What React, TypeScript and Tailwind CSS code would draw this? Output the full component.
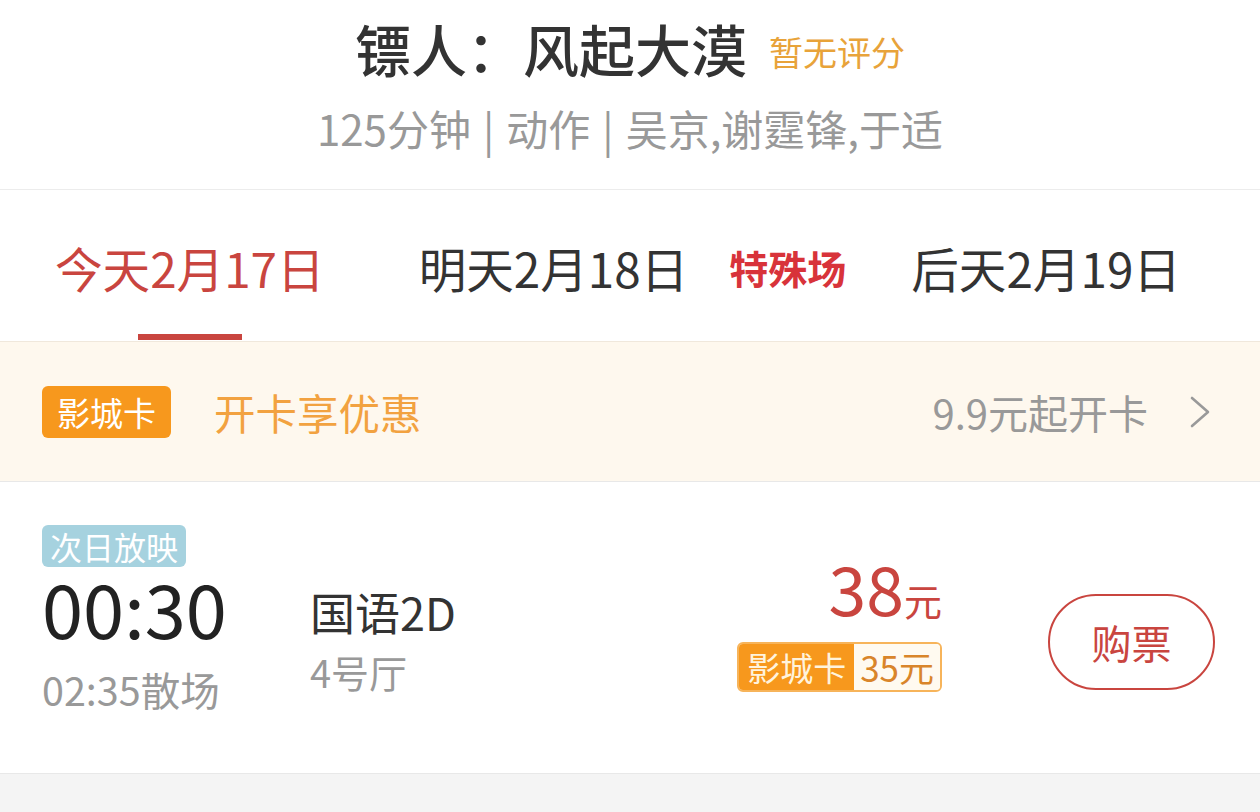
const font = { fontFamily: '"Noto Sans CJK SC", "Noto Sans", sans-serif' };

function Chevron() {
  return (
    <svg width="24" height="32" viewBox="0 0 24 32" className="ml-[40px] mr-[48px]">
      <polyline points="4,2 20,16 4,30" fill="none" stroke="#999" strokeWidth="2.6" strokeLinecap="round" strokeLinejoin="round" />
    </svg>
  );
}

function Header() {
  return (
    <div className="flex flex-col items-center h-[190px] border-b border-[#ececec] bg-white">
      <div className="flex items-end mt-[16px] h-[64px]">
        <span className="text-[56px] leading-[64px] font-medium text-[#333]">镖人：风起大漠</span>
        <span className="ml-[22px] mb-[6px] text-[34px] leading-[44px] text-[#e8a33a]">暂无评分</span>
      </div>
      <div className="mt-[24px] flex items-center text-[42px] leading-[48px] text-[#999]">
        <span>125分钟</span>
        <span className="mx-[12px]">|</span>
        <span>动作</span>
        <span className="mx-[12px]">|</span>
        <span>吴京,谢霆锋,于适</span>
      </div>
    </div>
  );
}

function Tabs() {
  return (
    <div className="flex items-start h-[151px] bg-white pt-[40px]">
      <div className="flex flex-col items-center ml-[55px]">
        <span className="text-[47.6px] leading-[76px] text-[#c9453f]">今天2月17日</span>
        <span className="mt-[28px] w-[104px] h-[6px] bg-[#c9453f]" />
      </div>
      <span className="ml-[94px] text-[47.6px] leading-[76px] text-[#333]">明天2月18日</span>
      <span className="ml-[41px] mt-[2px] text-[39px] leading-[70px] font-bold text-[#d8333a]">特殊场</span>
      <span className="ml-[65px] text-[47.6px] leading-[76px] text-[#333]">后天2月19日</span>
    </div>
  );
}

function CardBanner() {
  return (
    <div className="flex items-center h-[141px] bg-[#fef8ee] border-t border-[#f0e8dc] border-b border-b-[#e8e8e8]">
      <span className="ml-[42px] h-[52px] px-[15px] rounded-[6px] bg-[#f7981d] text-white text-[33px] leading-[52px]">影城卡</span>
      <span className="ml-[43px] text-[41.5px] leading-[52px] text-[#f2a240]">开卡享优惠</span>
      <span className="ml-auto text-[40px] leading-[52px] text-[#999]">9.9元起开卡</span>
      <Chevron />
    </div>
  );
}

function Showtime() {
  return (
    <div className="flex items-start h-[292px] bg-white border-b border-[#e8e8e8]">
      <div className="flex flex-col items-start pl-[42px] pt-[43px] w-[310px]">
        <span className="h-[42px] px-[8px] rounded-[6px] bg-[#a6d2df] text-white text-[32px] leading-[42px]">次日放映</span>
        <span className="mt-[6px] text-[74px] leading-[68px] text-[#222]">00:30</span>
        <span className="mt-[24px] text-[39.5px] leading-[48px] text-[#999]">02:35散场</span>
      </div>
      <div className="flex flex-col pt-[102px] flex-1">
        <span className="text-[45px] leading-[56px] text-[#333]">国语2D</span>
        <span className="mt-[8px] text-[38px] leading-[48px] text-[#999]">4号厅</span>
      </div>
      <div className="flex flex-col items-end pt-[69px]">
        <div className="flex items-baseline h-[72px]">
          <span className="text-[68px] leading-[72px] text-[#c9453f]">38</span>
          <span className="text-[38px] leading-[72px] text-[#c9453f]">元</span>
        </div>
        <div className="mt-[19px] flex h-[50px] rounded-[6px] border-2 border-[#f7b45a] overflow-hidden">
          <span className="px-[8px] bg-[#f7981d] text-[#fff3dc] text-[33px] leading-[46px]">影城卡</span>
          <span className="px-[6px] bg-[#fffaf0] text-[#d9852a] text-[35px] leading-[46px]">35元</span>
        </div>
      </div>
      <div className="mt-[112px] ml-[106px] mr-[45px] flex items-center justify-center w-[167px] h-[96px] rounded-full border-2 border-[#c9453f] text-[40px] text-[#c9453f]">
        购票
      </div>
    </div>
  );
}

export default function App() {
  return (
    <div className="w-[1260px] h-[812px] bg-[#f4f4f4] overflow-hidden" style={font}>
      <Header />
      <Tabs />
      <CardBanner />
      <Showtime />
    </div>
  );
}
